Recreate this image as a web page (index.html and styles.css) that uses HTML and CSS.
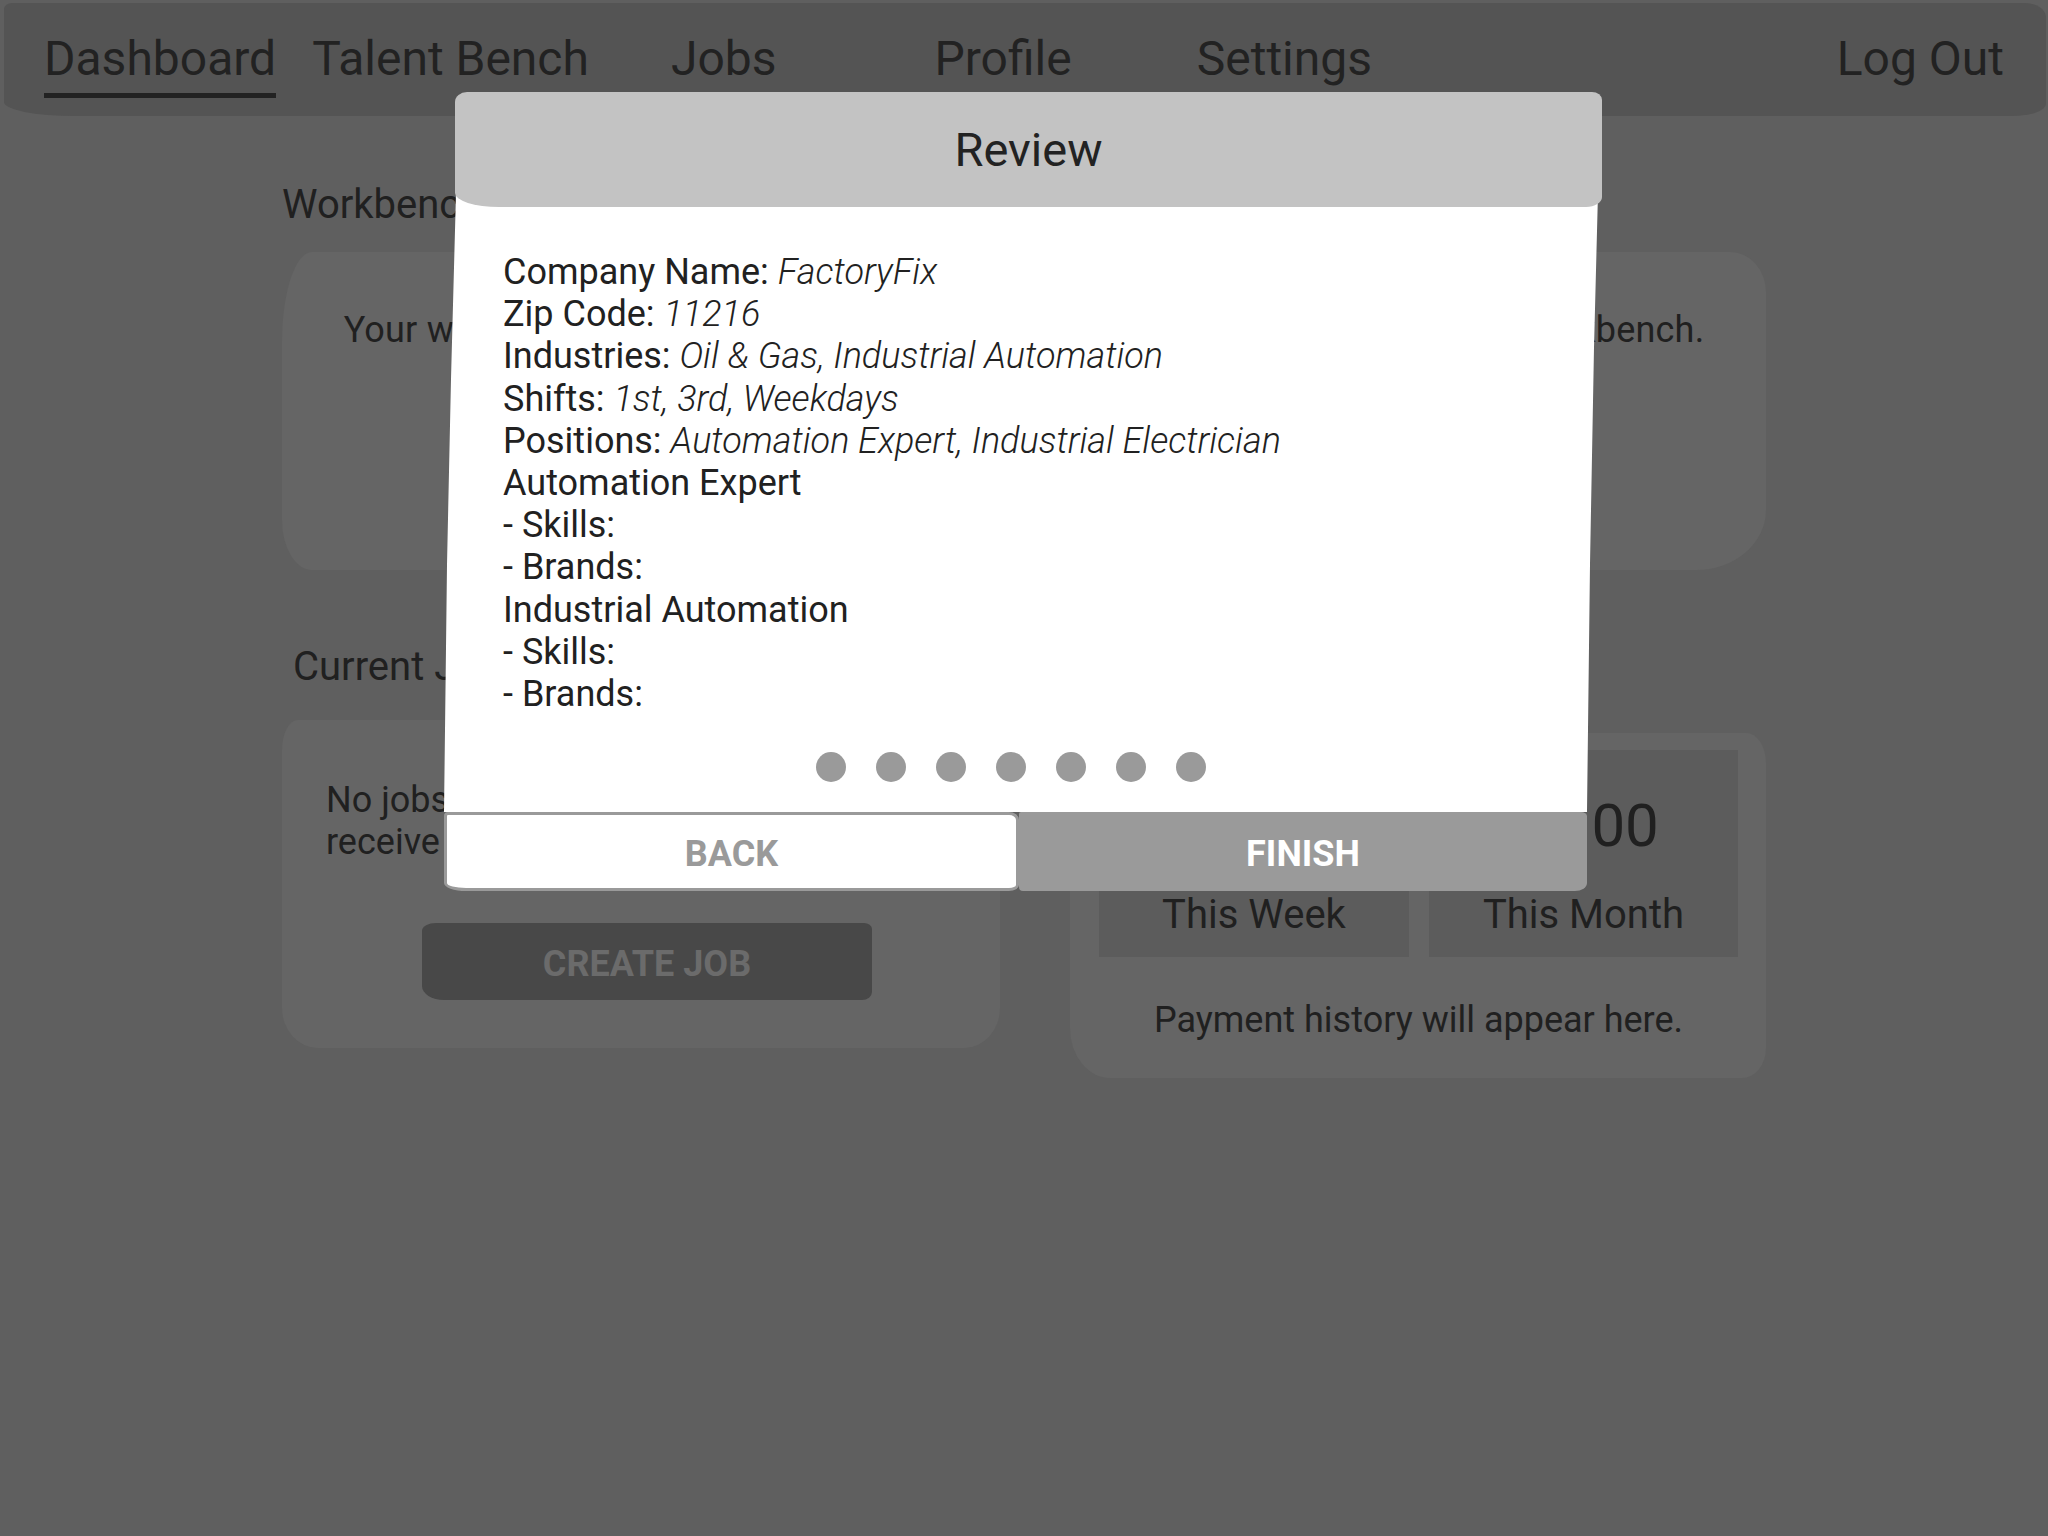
FILE: index.html
```html
<!DOCTYPE html>
<html lang="en">
<head>
<meta charset="utf-8">
<title>Dashboard - Review</title>
<link rel="stylesheet" href="styles.css">
</head>
<body>
<div class="app">
  <nav class="topnav">
    <a class="nav-item active">Dashboard</a>
    <a class="nav-item nav-talent">Talent Bench</a>
    <a class="nav-item nav-jobs">Jobs</a>
    <a class="nav-item nav-profile">Profile</a>
    <a class="nav-item nav-settings">Settings</a>
    <a class="nav-item nav-logout">Log Out</a>
  </nav>
  <main class="content">
    <section class="section">
      <h2 class="section-title">Workbench</h2>
      <div class="card card-workbench">
        <p class="card-text center wide">Your workbench is empty. Add talent from the Talent Bench to build your workbench.</p>
      </div>
    </section>
    <div class="row">
      <section class="col">
        <h2 class="section-title indent">Current Jobs</h2>
        <div class="card card-jobs">
          <p class="card-text">No jobs posted yet. Create a job to<br>receive applications from talent.</p>
          <button class="btn-create">CREATE JOB</button>
        </div>
      </section>
      <section class="col">
        <h2 class="section-title indent">Payments</h2>
        <div class="card card-pay">
          <div class="stats">
            <div class="stat">
              <div class="stat-num">$0.00</div>
              <div class="stat-label">This Week</div>
            </div>
            <div class="stat">
              <div class="stat-num">$0.00</div>
              <div class="stat-label">This Month</div>
            </div>
          </div>
          <p class="card-text center pay-note">Payment history will appear here.</p>
        </div>
      </section>
    </div>
  </main>
</div>

<div class="modal">
  <div class="modal-header">Review</div>
  <div class="modal-body">
    <div class="review-list">
      <div class="line">Company Name: <em>FactoryFix</em></div>
      <div class="line">Zip Code: <em>11216</em></div>
      <div class="line">Industries: <em>Oil &amp; Gas, Industrial Automation</em></div>
      <div class="line">Shifts: <em>1st, 3rd, Weekdays</em></div>
      <div class="line">Positions: <em>Automation Expert, Industrial Electrician</em></div>
      <div class="line">Automation Expert</div>
      <div class="line">- Skills:</div>
      <div class="line">- Brands:</div>
      <div class="line">Industrial Automation</div>
      <div class="line">- Skills:</div>
      <div class="line">- Brands:</div>
    </div>
    <div class="dots">
      <span class="dot"></span><span class="dot"></span><span class="dot"></span><span class="dot"></span><span class="dot"></span><span class="dot"></span><span class="dot"></span>
    </div>
  </div>
  <div class="modal-actions">
    <button class="btn-back">BACK</button>
    <button class="btn-finish">FINISH</button>
  </div>
</div>
</body>
</html>
```

FILE: styles.css
```css
* { box-sizing: border-box; }

html, body {
  margin: 0;
  padding: 0;
}

body {
  width: 2048px;
  height: 1536px;
  overflow: hidden;
  background: #5f5f5f;
  font-family: Roboto, "Noto Sans", "Liberation Sans", sans-serif;
  color: #202020;
  position: relative;
}

/* ---------- top navigation ---------- */
.topnav {
  display: flex;
  align-items: flex-start;
  height: 113px;
  margin: 3px 2px 0 4px;
  padding: 28px 42px 0 40px;
  background: #545454;
  border-radius: 8px 22px 34px 70px / 6px 14px 12px 14px;
}

.nav-item {
  display: block;
  font-size: 48px;
  line-height: 56px;
  color: #222222;
  text-decoration: none;
  padding-bottom: 6px;
  border-bottom: 5px solid transparent;
}

.nav-item.active { border-bottom-color: #222222; }
.nav-talent { margin-left: 36px; }
.nav-jobs { margin-left: 82px; }
.nav-profile { margin-left: 158px; }
.nav-settings { margin-left: 125px; }
.nav-logout { margin-left: auto; }

/* ---------- dashboard content ---------- */
.content {
  width: 1484px;
  margin: 65px auto 0;
}

.section-title {
  margin: 0;
  font-size: 40px;
  font-weight: 400;
  line-height: 47px;
  color: #202020;
}

.section-title.indent { padding-left: 11px; }

.card {
  background: #656565;
  margin-top: 24px;
}

.card-text {
  margin: 0;
  font-size: 36px;
  line-height: 42px;
  color: #202020;
}

.card-text.center { text-align: center; white-space: nowrap; }
.card-text.wide { letter-spacing: 0.2px; }

.card-workbench {
  height: 318px;
  padding: 57px 20px 0;
  border-radius: 30px 36px 70px 30px / 90px 40px 60px 50px;
}

.row {
  display: grid;
  grid-template-columns: 718px 696px;
  column-gap: 70px;
  margin-top: 73px;
  align-items: start;
}

.card-jobs {
  margin-top: 30px;
  height: 328px;
  padding: 59px 44px 0;
  border-radius: 16px 22px 36px 36px / 30px 26px 40px 40px;
  display: flex;
  flex-direction: column;
  align-items: flex-start;
}

.btn-create {
  margin: 60px 0 0 96px;
  width: 450px;
  height: 77px;
  border: 0;
  background: #484848;
  color: #6b6b6b;
  font-family: Roboto, "Noto Sans", "Liberation Sans", sans-serif;
  font-size: 36px;
  font-weight: 700;
  border-radius: 14px 8px 10px 22px / 8px 6px 8px 14px;
  padding: 4px 0 0;
}

.card-pay {
  margin-top: 43px;
  height: 345px;
  padding: 17px 28px 0 29px;
  border-radius: 30px 20px 24px 40px / 24px 30px 30px 50px;
}

.stats {
  display: grid;
  grid-template-columns: 310px 309px;
  column-gap: 20px;
}

.stat {
  height: 207px;
  background: #5c5c5c;
  padding-top: 41px;
  text-align: center;
}

.stat-num {
  font-size: 60px;
  line-height: 70px;
  color: #202020;
}

.stat-label {
  margin-top: 30px;
  font-size: 40px;
  line-height: 47px;
  color: #202020;
}

.pay-note { margin-top: 42px; }

/* ---------- modal ---------- */
.modal {
  position: absolute;
  left: 444px;
  top: 92px;
  width: 1160px;
  display: flex;
  flex-direction: column;
}

.modal-header {
  position: relative;
  z-index: 2;
  margin-left: 11px;
  width: 1147px;
  height: 115px;
  background: #c3c3c3;
  display: flex;
  align-items: center;
  justify-content: center;
  font-size: 47px;
  color: #222222;
  border-radius: 12px 10px 16px 44px / 10px 8px 10px 14px;
}

.modal-body {
  position: relative;
  z-index: 1;
  width: 1156px;
  height: 619px;
  margin-top: -14px;
  padding: 58px 59px 0;
  background: #ffffff;
  clip-path: polygon(12px 0, 1154px 0, 1150px 25%, 1146px 60%, 1143px 100%, 0 100%, 3px 60%, 7px 30%);
}

.review-list .line {
  font-size: 36px;
  line-height: 42.2px;
  color: #212121;
  white-space: nowrap;
}

.review-list em {
  font-style: italic;
  font-weight: 300;
}

.dots {
  display: flex;
  justify-content: center;
  gap: 30px;
  margin-top: 37px;
  padding-right: 23px;
}

.dot {
  width: 30px;
  height: 30px;
  border-radius: 50%;
  background: #9a9a9a;
}

.modal-actions {
  display: flex;
  height: 79px;
}

.btn-back,
.btn-finish {
  height: 79px;
  font-family: Roboto, "Noto Sans", "Liberation Sans", sans-serif;
  font-size: 36px;
  font-weight: 700;
  padding: 4px 0 0;
}

.btn-back {
  width: 575px;
  background: #ffffff;
  color: #9a9a9a;
  border: 3px solid #9a9a9a;
  border-radius: 4px 10px 10px 22px / 4px 8px 6px 8px;
}

.btn-finish {
  width: 568px;
  background: #9a9a9a;
  color: #ffffff;
  border: 0;
  border-radius: 2px 6px 12px 4px / 2px 4px 8px 4px;
}
```
